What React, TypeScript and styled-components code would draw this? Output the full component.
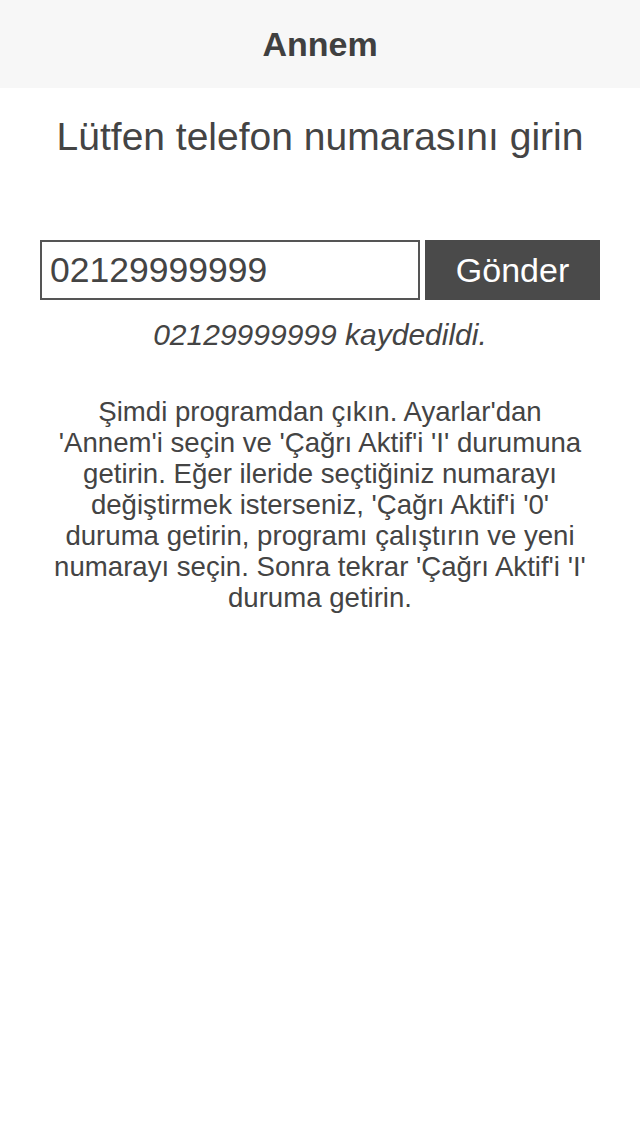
import React, { useState } from 'react';
import styled, { createGlobalStyle } from 'styled-components';

const GlobalStyle = createGlobalStyle`
  html, body {
    margin: 0;
    padding: 0;
    background: #ffffff;
    font-family: "Liberation Sans", Arial, sans-serif;
    color: #444444;
  }
`;

const Page = styled.div`
  width: 640px;
  min-height: 1136px;
  background: #ffffff;
`;

const NavBar = styled.header`
  height: 88px;
  background: #f7f7f7;
  display: flex;
  align-items: center;
  justify-content: center;
`;

const NavTitle = styled.h1`
  margin: 0;
  font-size: 34px;
  font-weight: bold;
  color: #404040;
`;

const Content = styled.main`
  display: flex;
  flex-direction: column;
  align-items: center;
  padding: 0 40px;
`;

const Heading = styled.h2`
  margin: 26px 0 0;
  font-size: 39px;
  font-weight: normal;
  line-height: 46px;
  white-space: nowrap;
  color: #444444;
`;

const Form = styled.form`
  display: flex;
  gap: 5px;
  width: 560px;
  margin-top: 80px;
`;

const PhoneInput = styled.input`
  box-sizing: border-box;
  width: 380px;
  height: 60px;
  border: 2px solid #555555;
  padding: 0 8px;
  font-family: "Liberation Sans", Arial, sans-serif;
  font-size: 35.5px;
  color: #444444;
  outline: none;
`;

const SendButton = styled.button`
  flex: 1;
  height: 60px;
  border: none;
  background: #4a4a4a;
  color: #ffffff;
  font-family: "Liberation Sans", Arial, sans-serif;
  font-size: 34px;
`;

const Saved = styled.p`
  margin: 18px 0 0;
  font-size: 30px;
  font-style: italic;
  color: #444444;
`;

const Instructions = styled.p`
  margin: 44px 0 0;
  width: 560px;
  text-align: center;
  font-size: 27.6px;
  line-height: 31px;
  white-space: nowrap;
  color: #444444;
`;

const lines = [
  "Şimdi programdan çıkın. Ayarlar'dan",
  "'Annem'i seçin ve 'Çağrı Aktif'i 'I' durumuna",
  'getirin. Eğer ileride seçtiğiniz numarayı',
  "değiştirmek isterseniz, 'Çağrı Aktif'i '0'",
  'duruma getirin, programı çalıştırın ve yeni',
  "numarayı seçin. Sonra tekrar 'Çağrı Aktif'i 'I'",
  'duruma getirin.'
];

export default function App() {
  const [phone, setPhone] = useState('02129999999');

  return (
    <Page>
      <GlobalStyle />
      <NavBar>
        <NavTitle>Annem</NavTitle>
      </NavBar>
      <Content>
        <Heading>Lütfen telefon numarasını girin</Heading>
        <Form onSubmit={(e) => e.preventDefault()}>
          <PhoneInput value={phone} onChange={(e) => setPhone(e.target.value)} />
          <SendButton type="submit">Gönder</SendButton>
        </Form>
        <Saved>{phone} kaydedildi.</Saved>
        <Instructions>
          {lines.map((line, i) => (
            <React.Fragment key={i}>
              {line}
              {i < lines.length - 1 && <br />}
            </React.Fragment>
          ))}
        </Instructions>
      </Content>
    </Page>
  );
}
